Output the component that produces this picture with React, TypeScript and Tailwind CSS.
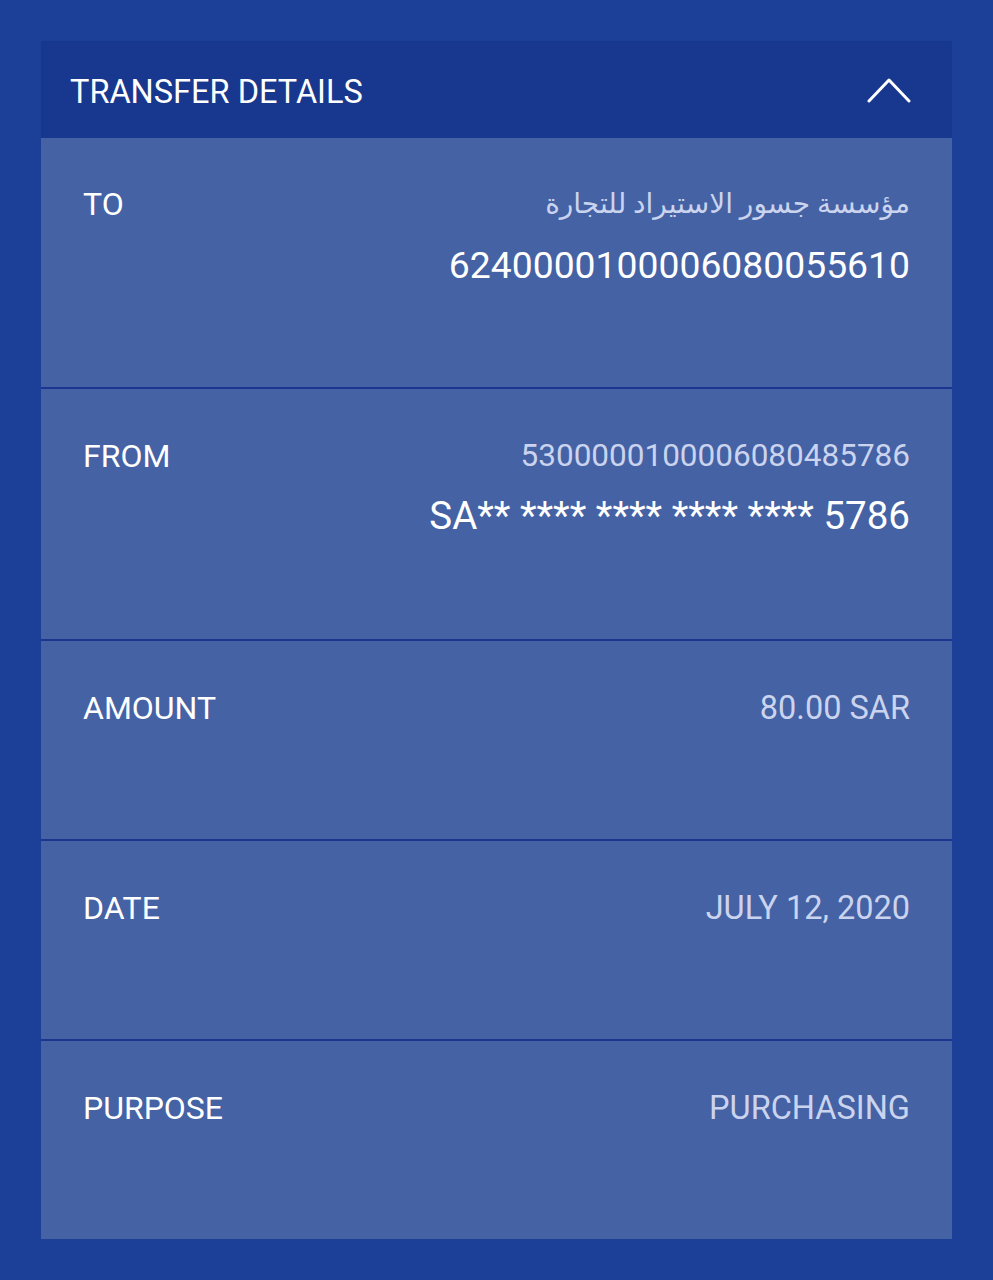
import React from "react";

const font = { fontFamily: "Roboto, 'Noto Sans', 'DejaVu Sans', sans-serif" };

function Row({
  label,
  height,
  children,
  border,
}: {
  label: string;
  height: string;
  children: React.ReactNode;
  border?: boolean;
}) {
  return (
    <div
      className={`flex justify-between bg-[#4562a5] px-[42px] ${height} ${
        border ? "border-t-2 border-[#1a3690] pt-[48px]" : "pt-[47px]"
      }`}
    >
      <div className="text-[32px] leading-[38px] text-white">{label}</div>
      <div className="flex flex-col items-end">{children}</div>
    </div>
  );
}

export default function App() {
  return (
    <div className="min-h-[1280px] w-full bg-[#1c4098] px-[41px] pt-[41px]" style={font}>
      <div className="flex flex-col">
        <div className="flex h-[97px] items-center justify-between bg-[#18388f] pl-[29px] pr-[41px]">
          <div className="pt-[6px] text-[32.5px] text-white">TRANSFER DETAILS</div>
          <svg width="44" height="26" viewBox="0 0 44 26" fill="none">
            <path d="M2 24 L22 3 L42 24" stroke="white" strokeWidth="3" strokeLinecap="round" strokeLinejoin="round" />
          </svg>
        </div>
        <Row label="TO" height="h-[249px]">
          <div dir="rtl" className="text-[28px] leading-[38px] text-[#cbd4ee]">
            مؤسسة جسور الاستيراد للتجارة
          </div>
          <div className="mt-[20px] text-[37.3px] leading-[44px] text-white">6240000100006080055610</div>
        </Row>
        <Row label="FROM" height="h-[252px]" border>
          <div className="text-[31.5px] leading-[38px] text-[#cbd4ee]">5300000100006080485786</div>
          <div className="mt-[18px] text-[38.5px] leading-[46px] text-white">SA** **** **** **** **** 5786</div>
        </Row>
        <Row label="AMOUNT" height="h-[200px]" border>
          <div className="text-[32.5px] leading-[38px] text-[#cbd4ee]">80.00 SAR</div>
        </Row>
        <Row label="DATE" height="h-[200px]" border>
          <div className="text-[32.5px] leading-[38px] text-[#cbd4ee]">JULY 12, 2020</div>
        </Row>
        <Row label="PURPOSE" height="h-[200px]" border>
          <div className="text-[32.5px] leading-[38px] text-[#cbd4ee]">PURCHASING</div>
        </Row>
      </div>
    </div>
  );
}
